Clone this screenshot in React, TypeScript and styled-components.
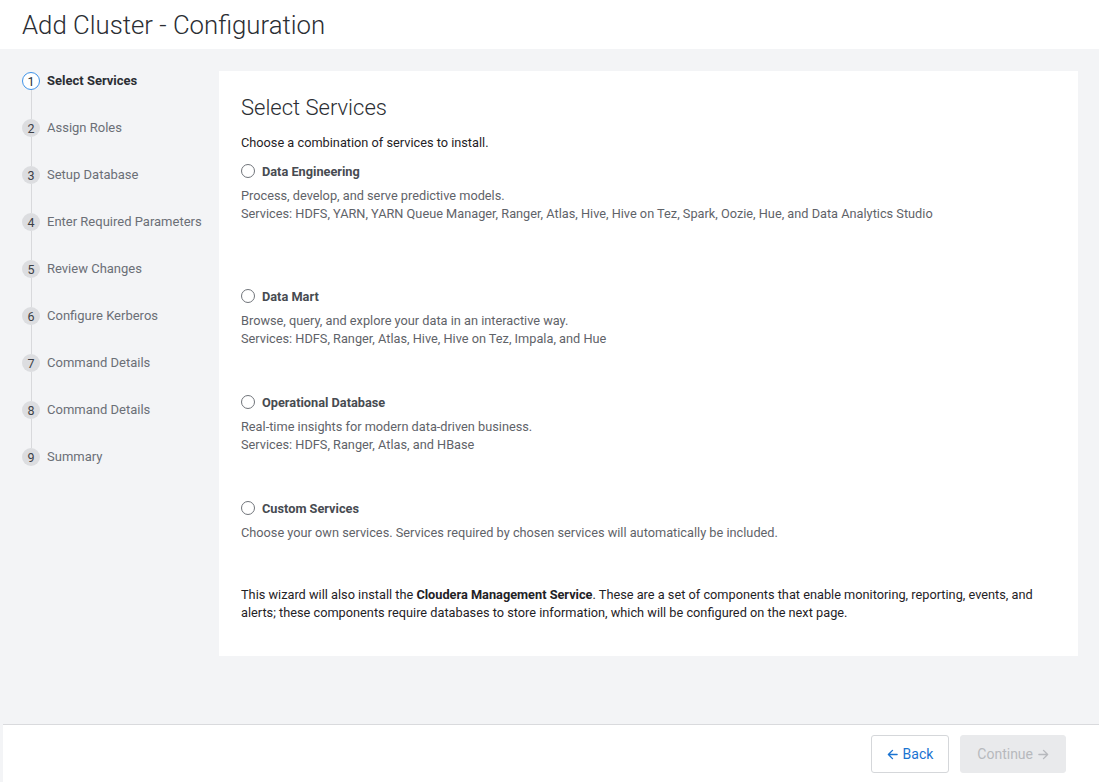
import React from "react";
import styled, { createGlobalStyle } from "styled-components";

const Global = createGlobalStyle`
  html, body { margin: 0; padding: 0; }
  body { font-family: Roboto, "Liberation Sans", sans-serif; background: #f3f4f6; }
  * { box-sizing: border-box; }
`;

const Page = styled.div`
  display: flex;
  flex-direction: column;
  min-height: 100vh;
`;

const Header = styled.header`
  height: 49px;
  background: #ffffff;
  display: flex;
  align-items: center;
  padding: 0 0 0 22px;
`;

const Title = styled.h1`
  margin: 0;
  font-size: 25.75px;
  font-weight: 300;
  color: #2b2e33;
`;

const Main = styled.main`
  flex: 1;
  display: flex;
  background: #f3f4f6;
  padding: 22px 21px 0 0;
`;

const Sidebar = styled.nav`
  width: 219px;
  flex-shrink: 0;
  padding: 1px 0 0 22px;
`;

const StepRow = styled.div<{ $last?: boolean }>`
  display: flex;
  gap: 7px;
  height: ${(p) => (p.$last ? "18px" : "47px")};
`;

const StepRail = styled.div`
  width: 18px;
  display: flex;
  flex-direction: column;
  align-items: center;
`;

const StepCircle = styled.div<{ $active?: boolean }>`
  width: 18px;
  height: 18px;
  border-radius: 50%;
  flex-shrink: 0;
  display: flex;
  align-items: center;
  justify-content: center;
  font-size: 12.5px;
  color: ${(p) => (p.$active ? "#2b2e33" : "#3d4046")};
  background: ${(p) => (p.$active ? "#ffffff" : "#dcdde0")};
  border: ${(p) => (p.$active ? "1px solid #3f93e8" : "none")};
`;

const StepLine = styled.div`
  flex: 1;
  width: 1px;
  background: #d8d9dc;
`;

const StepLabel = styled.div<{ $active?: boolean }>`
  font-size: 13px;
  line-height: 18px;
  font-weight: ${(p) => (p.$active ? 700 : 400)};
  color: ${(p) => (p.$active ? "#2b2e33" : "#6b6f76")};
  white-space: nowrap;
`;

const Panel = styled.section`
  flex: 1;
  align-self: flex-start;
  height: 585px;
  background: #ffffff;
  padding: 24px 22px 0 22px;
`;

const Heading = styled.h2`
  margin: 0 0 13px;
  font-size: 22px;
  line-height: 26px;
  font-weight: 300;
  color: #2b2e33;
`;

const Intro = styled.p`
  margin: 0 0 10px;
  font-size: 12.75px;
  line-height: 18px;
  color: #1f2226;
`;

const Option = styled.div<{ $gap: number }>`
  margin-bottom: ${(p) => p.$gap}px;
`;

const OptionHead = styled.label`
  display: flex;
  align-items: center;
  gap: 7px;
  height: 18px;
  margin-bottom: 7px;
`;

const Radio = styled.span`
  width: 14px;
  height: 14px;
  border-radius: 50%;
  border: 1.5px solid #70747a;
  background: #fff;
`;

const OptionTitle = styled.span`
  font-size: 12.75px;
  font-weight: 700;
  color: #474b51;
`;

const Desc = styled.p`
  margin: 0;
  font-size: 12.75px;
  line-height: 18px;
  color: #5f6369;
`;

const Note = styled.p`
  margin: 0;
  font-size: 12.75px;
  line-height: 18px;
  color: #1f2226;
  b { font-weight: 700; }
`;

const Footer = styled.footer`
  height: 58px;
  margin-left: 3px;
  background: #ffffff;
  border-top: 1px solid #d9dadd;
  display: flex;
  justify-content: flex-end;
  align-items: flex-start;
  gap: 11px;
  padding: 10px 33px 0 0;
`;

const Button = styled.button<{ $disabled?: boolean }>`
  height: 38px;
  display: flex;
  align-items: center;
  gap: 5px;
  padding: 0 ${(p) => (p.$disabled ? 16 : 15)}px;
  border-radius: 3px;
  font-family: Roboto, "Liberation Sans", sans-serif;
  font-size: 14px;
  cursor: ${(p) => (p.$disabled ? "default" : "pointer")};
  color: ${(p) => (p.$disabled ? "#b7b9bd" : "#1a73d1")};
  background: ${(p) => (p.$disabled ? "#e9eaec" : "#ffffff")};
  border: 1px solid ${(p) => (p.$disabled ? "#e9eaec" : "#d5d7da")};
`;

const Arrow = ({ dir }: { dir: "left" | "right" }) => (
  <svg width="11" height="11" viewBox="0 0 12 12" fill="none" stroke="currentColor" strokeWidth="1.5" strokeLinecap="round" strokeLinejoin="round">
    {dir === "left" ? (
      <path d="M11 6H1.5M6 1.5L1.5 6L6 10.5" />
    ) : (
      <path d="M1 6h9.5M6 1.5L10.5 6L6 10.5" />
    )}
  </svg>
);

const steps = [
  "Select Services",
  "Assign Roles",
  "Setup Database",
  "Enter Required Parameters",
  "Review Changes",
  "Configure Kerberos",
  "Command Details",
  "Command Details",
  "Summary",
];

const options = [
  {
    title: "Data Engineering",
    lines: [
      "Process, develop, and serve predictive models.",
      "Services: HDFS, YARN, YARN Queue Manager, Ranger, Atlas, Hive, Hive on Tez, Spark, Oozie, Hue, and Data Analytics Studio",
    ],
    gap: 64,
  },
  {
    title: "Data Mart",
    lines: [
      "Browse, query, and explore your data in an interactive way.",
      "Services: HDFS, Ranger, Atlas, Hive, Hive on Tez, Impala, and Hue",
    ],
    gap: 45,
  },
  {
    title: "Operational Database",
    lines: [
      "Real-time insights for modern data-driven business.",
      "Services: HDFS, Ranger, Atlas, and HBase",
    ],
    gap: 45,
  },
  {
    title: "Custom Services",
    lines: [
      "Choose your own services. Services required by chosen services will automatically be included.",
    ],
    gap: 44,
  },
];

export default function App() {
  return (
    <>
      <Global />
      <Page>
        <Header>
          <Title>Add Cluster - Configuration</Title>
        </Header>
        <Main>
          <Sidebar>
            {steps.map((s, i) => {
              const last = i === steps.length - 1;
              return (
                <StepRow key={i} $last={last}>
                  <StepRail>
                    <StepCircle $active={i === 0}>{i + 1}</StepCircle>
                    {!last && <StepLine />}
                  </StepRail>
                  <StepLabel $active={i === 0}>{s}</StepLabel>
                </StepRow>
              );
            })}
          </Sidebar>
          <Panel>
            <Heading>Select Services</Heading>
            <Intro>Choose a combination of services to install.</Intro>
            {options.map((o) => (
              <Option key={o.title} $gap={o.gap}>
                <OptionHead>
                  <Radio />
                  <OptionTitle>{o.title}</OptionTitle>
                </OptionHead>
                {o.lines.map((l) => (
                  <Desc key={l}>{l}</Desc>
                ))}
              </Option>
            ))}
            <Note>
              This wizard will also install the <b>Cloudera Management Service</b>. These are a set of
              components that enable monitoring, reporting, events, and alerts; these components
              require databases to store information, which will be configured on the next page.
            </Note>
          </Panel>
        </Main>
        <Footer>
          <Button>
            <Arrow dir="left" />
            Back
          </Button>
          <Button $disabled>
            Continue
            <Arrow dir="right" />
          </Button>
        </Footer>
      </Page>
    </>
  );
}
